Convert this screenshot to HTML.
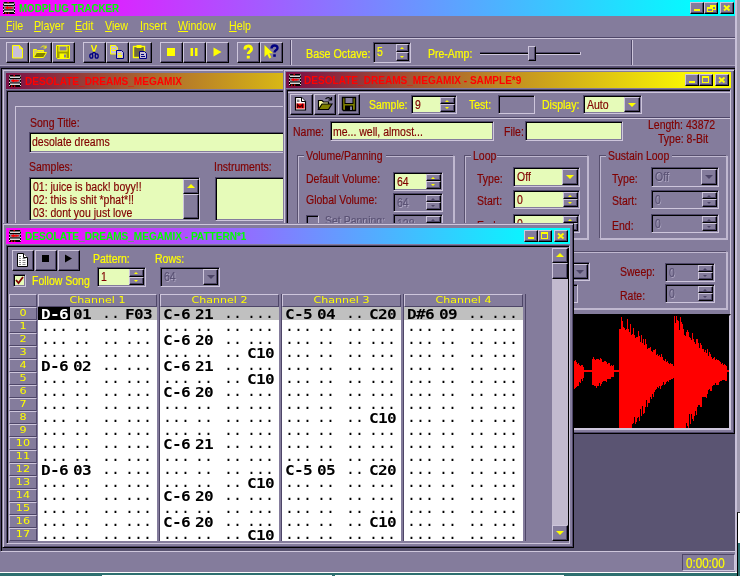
<!DOCTYPE html>
<html><head><meta charset="utf-8"><title>MODPLUG TRACKER</title>
<style>
html,body{margin:0;padding:0}
body{width:740px;height:576px;overflow:hidden;background:#a09ab0;position:relative;font-family:"Liberation Sans",sans-serif}
#app{position:absolute;left:0;top:0;width:736px;height:572px;background:#847c9c;overflow:hidden;will-change:transform}
#app div,#app span,#app svg.ic,#app i{position:absolute;box-sizing:border-box}
.win{background:#847c9c;overflow:hidden}
.rs{background:#847c9c;border:1px solid;border-color:#cec6dc #000000 #000000 #cec6dc;box-shadow:inset -1px -1px 0 #4e4668}
.sk{border:1px solid;border-color:#4e4668 #cec6dc #cec6dc #4e4668;box-shadow:inset 1px 1px 0 #000000,inset -1px -1px 0 #847c9c}
.gb{border:1px solid;border-color:#58506f #c0b8d0 #c0b8d0 #58506f;box-shadow:inset 1px 1px 0 #c0b8d0,1px 1px 0 #c0b8d0}
.t{font-size:12.5px;line-height:14px;color:#800000;white-space:nowrap;transform:scaleX(.84);transform-origin:0 0}
.t{-webkit-text-stroke:.2px currentColor}
.t.y{color:#ffff00}
.t.dis{color:#5a5274;text-shadow:1px 1px 0 #b0a8c4}
.m{font-size:13px;line-height:15px;color:#ffff00;white-space:nowrap;transform:scaleX(.82);transform-origin:0 0}
.cap{font-size:11px;line-height:12px;font-weight:bold;white-space:nowrap;transform-origin:0 0;transform:scaleX(.915)}
.au{left:50%;top:50%;margin:-1px 0 0 -3px;width:0;height:0;border:2px solid transparent;border-top:0;border-bottom:2px solid #ff0}
.ad{left:50%;top:50%;margin:-1px 0 0 -3px;width:0;height:0;border:2px solid transparent;border-bottom:0;border-top:2px solid #ff0}
.ad.big{margin:-2px 0 0 -4px;border-width:4px 4px 0 4px}
.au.big{margin:-3px 0 0 -4px;border-width:0 4px 4px 4px}
.rh{background:#847c9c;border:1px solid;border-color:#cec6dc #4e4668 #4e4668 #cec6dc;color:#ff0;font:8px/11px "DejaVu Sans","Liberation Sans",sans-serif;text-align:center}
.rh b{display:block;font-weight:normal;transform:scaleX(1.4)}
.pt{font:bold 14px/13px "DejaVu Sans Mono","Liberation Mono",monospace;letter-spacing:-.6px;transform:scaleX(1.15);transform-origin:0 0;color:#000;white-space:pre}
/*dots*/.pd{font:bold 11.5px/13px "DejaVu Sans Mono","Liberation Mono",monospace;letter-spacing:2.077px;color:#000;white-space:pre}
.pt.w{color:#fff}
</style></head><body>
<div id="app">
<div style="left:0px;top:0px;width:736px;height:16px;background:linear-gradient(90deg,#ff00ff 0%,#ff00ff 2%,#00ffff 96%,#00ffff 100%)"></div>
<svg class="ic" style="left:3px;top:2px" width="12" height="12" viewBox="0 0 12 12"><rect width="12" height="12" fill="#000"/><rect x="1" y="1.500" width="10" height="1.500" fill="#dcdcdc"/><rect x="1" y="4" width="10" height="3.500" fill="#8a8494"/><rect x="1" y="8.500" width="10" height="1.500" fill="#dcdcdc"/><path d="M.5 .5v11M11.500 .5v11" stroke="#fff" stroke-width="1" stroke-dasharray="1 2.200"/><path d="M2 5.750h8" stroke="#f00" stroke-width="1"/><path d="M3.500 4.800v1.900M4.500 4.300v2.900M5.500 5v1.500M7 4.500v2.500M8 5v1.500" stroke="#f00" stroke-width="1"/><rect x="4.500" y="0" width="1.300" height="1.300" fill="#f00"/><rect x="2" y="10.500" width="1.500" height="1.300" fill="#f00"/><rect x="5" y="10.500" width="1.300" height="1.300" fill="#f00"/></svg>
<span class="cap" style="left:19px;top:2px;color:#00ff00;transform:scaleX(.885)">MODPLUG TRACKER</span>
<div class="rs" style="left:690px;top:2px;width:14px;height:12px;"><i style="left:3px;top:6px;width:6px;height:2px;background:#ff0"></i></div>
<div class="rs" style="left:704px;top:2px;width:14px;height:12px;"><i style="left:5px;top:2px;width:6px;height:5px;border:1px solid #ff0;border-top-width:2px"></i><i style="left:2px;top:4px;width:6px;height:5px;border:1px solid #ff0;border-top-width:2px;background:#847c9c"></i></div>
<div class="rs" style="left:720px;top:2px;width:14px;height:12px;"><svg style="position:absolute;left:2px;top:2px" width="8" height="6" viewBox="0 0 8 6"><path d="M1 .5l5.500 5M6.500 .5L1 5.500" stroke="#ff0" stroke-width="1.900" fill="none"/></svg></div>
<span class="m" style="left:6px;top:18px;"><u>F</u>ile</span>
<span class="m" style="left:34px;top:18px;"><u>P</u>layer</span>
<span class="m" style="left:75px;top:18px;"><u>E</u>dit</span>
<span class="m" style="left:105px;top:18px;"><u>V</u>iew</span>
<span class="m" style="left:140px;top:18px;"><u>I</u>nsert</span>
<span class="m" style="left:178px;top:18px;"><u>W</u>indow</span>
<span class="m" style="left:229px;top:18px;"><u>H</u>elp</span>
<div style="left:0px;top:37px;width:736px;height:1px;background:#4e4668"></div>
<div style="left:0px;top:38px;width:736px;height:1px;background:#cec6dc"></div>
<div style="left:0px;top:65px;width:736px;height:1px;background:#a8a0bc"></div>
<div style="left:0px;top:66px;width:736px;height:1px;background:#5e5678"></div>
<div style="left:290px;top:40px;width:1px;height:25px;background:#4e4668"></div>
<div style="left:291px;top:40px;width:1px;height:25px;background:#cec6dc"></div>
<div style="left:631px;top:40px;width:1px;height:25px;background:#4e4668"></div>
<div style="left:632px;top:40px;width:1px;height:25px;background:#cec6dc"></div>
<div class="rs" style="left:6px;top:42px;width:23px;height:21px;"><svg style="position:absolute;left:2px;top:1px" width="16" height="16" viewBox="0 0 16 16"><path d="M3.500 1.500h7l3 3v9.500h-10z" fill="#c8c0d8" stroke="#ff0"/><path d="M10.500 1.500v3h3" fill="none" stroke="#ff0"/></svg></div>
<div class="rs" style="left:29px;top:42px;width:23px;height:21px;"><svg style="position:absolute;left:2px;top:1px" width="16" height="16" viewBox="0 0 16 16"><path d="M1.5 13.5v-8h3l1 1h6v2" fill="#d8d060" stroke="#ff0"/><path d="M1.5 13.5l3-5h10l-3 5z" fill="#808000" stroke="#ff0"/><path d="M9 3.5c1.500-2 4-2 5 0M14 1.500v2.500h-2.500" fill="none" stroke="#ff0"/></svg></div>
<div class="rs" style="left:52px;top:42px;width:23px;height:21px;"><svg style="position:absolute;left:2px;top:1px" width="16" height="16" viewBox="0 0 16 16"><path d="M1.500 1.500h13v13h-12l-1-1z" fill="#a0a000" stroke="#ff0"/><rect x="4" y="2" width="8" height="5" fill="#847c9c" stroke="#ff0"/><rect x="4.500" y="9.500" width="7" height="5" fill="#ff0"/><rect x="9" y="10.500" width="2" height="3" fill="#847c9c"/><rect x="12.500" y="2.500" width="1" height="1.500" fill="#847c9c"/></svg></div>
<div class="rs" style="left:83px;top:42px;width:23px;height:21px;"><svg style="position:absolute;left:2px;top:1px" width="16" height="16" viewBox="0 0 16 16"><path d="M5.500 1l2.500 7.500M10.500 1l-2.500 7.500" fill="none" stroke="#ff0" stroke-width="1.400"/><path d="M8 8l-2 2M8 8l2 2" stroke="#000080" stroke-width="1.300"/><ellipse cx="5.300" cy="12" rx="1.500" ry="2.200" fill="none" stroke="#000080" stroke-width="1.300"/><ellipse cx="10.700" cy="12" rx="1.500" ry="2.200" fill="none" stroke="#000080" stroke-width="1.300"/></svg></div>
<div class="rs" style="left:106px;top:42px;width:23px;height:21px;"><svg style="position:absolute;left:2px;top:1px" width="16" height="16" viewBox="0 0 16 16"><path d="M1.500 1.500h5l2 2v6.500h-7z" fill="#c8c0d8" stroke="#ff0"/><path d="M3 4.500h3M3 6.500h4" stroke="#ff0"/><path d="M7.500 6.500h5l2 2v6h-7z" fill="#c8c0d8" stroke="#000080"/><path d="M9 9.500h3M9 11.500h4M9 13h4" stroke="#ff0"/></svg></div>
<div class="rs" style="left:129px;top:42px;width:23px;height:21px;"><svg style="position:absolute;left:2px;top:1px" width="16" height="16" viewBox="0 0 16 16"><rect x="1.500" y="2.500" width="11" height="11" fill="#6c6840" stroke="#ff0" stroke-width="1.400"/><rect x="4.500" y="1" width="5" height="3" fill="#ff0"/><path d="M7.500 7.500h5l2 2v5h-7z" fill="#c8c0d8" stroke="#000080"/><path d="M9 10.500h3M9 12.500h4" stroke="#000080"/></svg></div>
<div class="rs" style="left:160px;top:42px;width:23px;height:21px;"><svg style="position:absolute;left:2px;top:1px" width="16" height="16" viewBox="0 0 16 16"><rect x="4" y="4" width="8" height="8" fill="#ff0"/></svg></div>
<div class="rs" style="left:183px;top:42px;width:23px;height:21px;"><svg style="position:absolute;left:2px;top:1px" width="16" height="16" viewBox="0 0 16 16"><rect x="4.500" y="4" width="2.500" height="8" fill="#ff0"/><rect x="9" y="4" width="2.500" height="8" fill="#ff0"/></svg></div>
<div class="rs" style="left:206px;top:42px;width:23px;height:21px;"><svg style="position:absolute;left:2px;top:1px" width="16" height="16" viewBox="0 0 16 16"><path d="M4.500 3.500l8 4.500l-8 4.500z" fill="#ff0"/></svg></div>
<div class="rs" style="left:237px;top:42px;width:23px;height:21px;"><svg style="position:absolute;left:2px;top:1px" width="16" height="16" viewBox="0 0 16 16"><path d="M5 5.500c0-4.500 6.500-4.500 6.500-.5c0 2.800-3.200 2.400-3.200 5" fill="none" stroke="#ff0" stroke-width="3"/><rect x="6.800" y="11.800" width="3" height="2.700" fill="#ff0"/></svg></div>
<div class="rs" style="left:260px;top:42px;width:23px;height:21px;"><svg style="position:absolute;left:2px;top:1px" width="16" height="16" viewBox="0 0 16 16"><path d="M1.500 1v12l2.800-2.800l2 4.300l2-.9l-2-4.300h3.700z" fill="#ff0"/><path d="M8.500 4.500c0-4 6-4 6-.5c0 2.500-3 2.200-3 4.500" fill="none" stroke="#000080" stroke-width="2.400"/><rect x="10.200" y="10.300" width="2.600" height="2.500" fill="#000080"/></svg></div>
<span class="t y" style="left:306px;top:46.5px;transform:scaleX(.86)">Base Octave:</span>
<div class="sk" style="left:373px;top:42px;width:38px;height:21px;background:#847c9c;"></div>
<div class="rs" style="left:396px;top:44px;width:13px;height:8px;"><i class="au" style="border-bottom-color:#ffff00"></i></div>
<div class="rs" style="left:396px;top:52px;width:13px;height:9px;"><i class="ad" style="border-top-color:#ffff00"></i></div>
<span class="t y" style="left:376.5px;top:45px;">5</span>
<span class="t y" style="left:427.5px;top:46.5px;">Pre-Amp:</span>
<div style="left:480px;top:52px;width:101px;height:1px;background:#4e4668"></div>
<div style="left:480px;top:53px;width:101px;height:1px;background:#000000"></div>
<div style="left:480px;top:54px;width:101px;height:1px;background:#cec6dc"></div>
<div style="left:580px;top:52px;width:1px;height:3px;background:#cec6dc"></div>
<div class="rs" style="left:528px;top:46px;width:8px;height:15px;"></div>
<div class="sk" style="left:682px;top:554px;width:53px;height:17px;background:#847c9c;box-shadow:none"></div>
<span class="t y" style="left:686px;top:555px;font-size:14.5px;line-height:16px;transform:scaleX(.8)">0:00:00</span>
<div style="left:0px;top:67px;width:736px;height:485px;background:#5a5472;border:1px solid;border-color:#4e4668 #cec6dc #cec6dc #4e4668;box-shadow:inset 1px 1px 0 #000"></div>
<div class="win" style="left:2px;top:69px;width:300px;height:300px;border:1px solid;border-color:#847c9c #000 #000 #847c9c;box-shadow:inset 1px 1px 0 #cec6dc,inset -1px -1px 0 #4e4668"></div>
<div style="left:6px;top:73px;width:394px;height:16px;background:linear-gradient(90deg,#7c1048 0%,#ffff00 100%)"></div>
<svg class="ic" style="left:9px;top:75px" width="12" height="12" viewBox="0 0 12 12"><rect width="12" height="12" fill="#000"/><rect x="1" y="1.500" width="10" height="1.500" fill="#dcdcdc"/><rect x="1" y="4" width="10" height="3.500" fill="#8a8494"/><rect x="1" y="8.500" width="10" height="1.500" fill="#dcdcdc"/><path d="M.5 .5v11M11.500 .5v11" stroke="#fff" stroke-width="1" stroke-dasharray="1 2.200"/><path d="M2 5.750h8" stroke="#f00" stroke-width="1"/><path d="M3.500 4.800v1.900M4.500 4.300v2.900M5.500 5v1.500M7 4.500v2.500M8 5v1.500" stroke="#f00" stroke-width="1"/><rect x="4.500" y="0" width="1.300" height="1.300" fill="#f00"/><rect x="2" y="10.500" width="1.500" height="1.300" fill="#f00"/><rect x="5" y="10.500" width="1.300" height="1.300" fill="#f00"/></svg>
<span class="cap" style="left:25px;top:75px;color:#ff0000">DESOLATE_DREAMS_MEGAMIX</span>
<div style="left:6px;top:90px;width:292px;height:280px;border:1px solid;border-color:#4e4668 #cec6dc #cec6dc #4e4668;box-shadow:inset 1px 1px 0 #000"></div>
<div style="left:15px;top:106px;width:280px;height:1px;background:#cec6dc"></div>
<div style="left:15px;top:106px;width:1px;height:200px;background:#cec6dc"></div>
<span class="t" style="left:30px;top:116px;">Song Title:</span>
<div class="sk" style="left:29px;top:132px;width:262px;height:21px;background:#e6fbb9;"></div>
<span class="t" style="left:32px;top:135px;">desolate dreams</span>
<span class="t" style="left:29px;top:160px;">Samples:</span>
<span class="t" style="left:214px;top:160px;">Instruments:</span>
<div class="sk" style="left:29px;top:177px;width:171px;height:44px;background:#e6fbb9;"></div>
<span class="t" style="left:33px;top:180px;">01: juice is back! boyy!!</span>
<span class="t" style="left:33px;top:193px;">02: this is shit *phat*!!</span>
<span class="t" style="left:33px;top:206px;">03: dont you just love</span>
<div style="left:183px;top:179px;width:16px;height:40px;background:#c2bacf"></div>
<div class="rs" style="left:183px;top:179px;width:16px;height:15px;"><i class="au big"></i></div>
<div class="rs" style="left:183px;top:194px;width:16px;height:25px;"></div>
<div class="sk" style="left:215px;top:177px;width:76px;height:44px;background:#e6fbb9;"></div>
<div class="win" style="left:283px;top:69px;width:452px;height:365px;border:1px solid;border-color:#847c9c #000 #000 #847c9c;box-shadow:inset 1px 1px 0 #cec6dc,inset -1px -1px 0 #4e4668"></div>
<div style="left:286px;top:72px;width:445px;height:16px;background:linear-gradient(90deg,#7c1048 0%,#7c1048 1%,#ffff00 94%,#ffff00 100%)"></div>
<svg class="ic" style="left:289px;top:74px" width="12" height="12" viewBox="0 0 12 12"><rect width="12" height="12" fill="#000"/><rect x="1" y="1.500" width="10" height="1.500" fill="#dcdcdc"/><rect x="1" y="4" width="10" height="3.500" fill="#8a8494"/><rect x="1" y="8.500" width="10" height="1.500" fill="#dcdcdc"/><path d="M.5 .5v11M11.500 .5v11" stroke="#fff" stroke-width="1" stroke-dasharray="1 2.200"/><path d="M2 5.750h8" stroke="#f00" stroke-width="1"/><path d="M3.500 4.800v1.900M4.500 4.300v2.900M5.500 5v1.500M7 4.500v2.500M8 5v1.500" stroke="#f00" stroke-width="1"/><rect x="4.500" y="0" width="1.300" height="1.300" fill="#f00"/><rect x="2" y="10.500" width="1.500" height="1.300" fill="#f00"/><rect x="5" y="10.500" width="1.300" height="1.300" fill="#f00"/></svg>
<span class="cap" style="left:304px;top:74px;color:#ff0000">DESOLATE_DREAMS_MEGAMIX - SAMPLE*9</span>
<div class="rs" style="left:685px;top:74px;width:14px;height:12px;"><i style="left:3px;top:6px;width:6px;height:2px;background:#ff0"></i></div>
<div class="rs" style="left:699px;top:74px;width:14px;height:12px;"><i style="left:2px;top:1px;width:7px;height:7px;border:1px solid #ff0;border-top-width:2px"></i></div>
<div class="rs" style="left:715px;top:74px;width:14px;height:12px;"><svg style="position:absolute;left:2px;top:2px" width="8" height="6" viewBox="0 0 8 6"><path d="M1 .5l5.500 5M6.500 .5L1 5.500" stroke="#ff0" stroke-width="1.900" fill="none"/></svg></div>
<div style="left:286px;top:89px;width:445px;height:341px;border:1px solid;border-color:#4e4668 #cec6dc #cec6dc #4e4668;box-shadow:inset 1px 1px 0 #000"></div>
<div style="left:288px;top:92px;width:442px;height:1px;background:#cec6dc"></div>
<div class="rs" style="left:290px;top:94px;width:23px;height:21px;"><svg style="position:absolute;left:2px;top:1px" width="16" height="16" viewBox="0 0 16 16"><path d="M2.500 1.500h6l4 4v8.500h-10z" fill="#fff" stroke="#000" stroke-width="1.200"/><path d="M8.500 1.500v4h4" fill="#fff" stroke="#000"/><rect x="4" y="3.500" width="2.500" height="2.500" fill="#888"/><rect x="3.500" y="7.500" width="8" height="5" fill="#f00"/><path d="M4.500 12v-3.500l2.500 2.500l2.500-2.500v3.500" fill="none" stroke="#400" stroke-width="1.300"/></svg></div>
<div class="rs" style="left:314px;top:94px;width:22px;height:21px;"><svg style="position:absolute;left:2px;top:1px" width="16" height="16" viewBox="0 0 16 16"><path d="M1.500 13.500v-9h3.500l1.500 1.500h5v2.500" fill="#ffffa0" stroke="#000" stroke-width="1.200"/><path d="M1.500 13.500l3.500-5.500h10l-3.500 5.500z" fill="#808000" stroke="#000" stroke-width="1.200"/><path d="M8.500 3c1.500-2 4.500-2 5.500 0.500M14.500 1v3h-3" fill="none" stroke="#000" stroke-width="1.200"/></svg></div>
<div class="rs" style="left:338px;top:94px;width:22px;height:21px;"><svg style="position:absolute;left:2px;top:1px" width="16" height="16" viewBox="0 0 16 16"><path d="M1.500 1.500h13v13h-12l-1-1z" fill="#808000" stroke="#000" stroke-width="1.400"/><rect x="4" y="1.500" width="8" height="6" fill="#847c9c" stroke="#000"/><rect x="4" y="9.500" width="8" height="5" fill="#000"/><rect x="9" y="10.500" width="2" height="3.500" fill="#847c9c"/></svg></div>
<span class="t y" style="left:369px;top:98px;">Sample:</span>
<div class="sk" style="left:411px;top:95px;width:46px;height:19px;background:#e6fbb9;"></div>
<div class="rs" style="left:440px;top:97px;width:15px;height:7px;"><i class="au" style="border-bottom-color:#ffff00"></i></div>
<div class="rs" style="left:440px;top:104px;width:15px;height:8px;"><i class="ad" style="border-top-color:#ffff00"></i></div>
<span class="t" style="left:415px;top:98px;">9</span>
<span class="t y" style="left:469px;top:98px;">Test:</span>
<div class="sk" style="left:498px;top:95px;width:37px;height:19px;background:#847c9c;"></div>
<span class="t y" style="left:542px;top:98px;">Display:</span>
<div class="sk" style="left:583px;top:95px;width:59px;height:19px;background:#e6fbb9;"></div>
<div class="rs" style="left:624px;top:97px;width:16px;height:15px;"><i class="ad big" style="border-top-color:#ffff00"></i></div>
<span class="t" style="left:586.5px;top:98px;">Auto</span>
<div style="left:288px;top:117px;width:442px;height:1px;background:#4e4668"></div>
<div style="left:288px;top:118px;width:442px;height:1px;background:#cec6dc"></div>
<span class="t" style="left:293px;top:125px;">Name:</span>
<div class="sk" style="left:330px;top:121px;width:164px;height:20px;background:#e6fbb9;"></div>
<span class="t" style="left:333px;top:124.5px;">me... well, almost...</span>
<span class="t" style="left:504px;top:125px;">File:</span>
<div class="sk" style="left:525px;top:121px;width:98px;height:20px;background:#e6fbb9;"></div>
<span class="t" style="left:648px;top:118px;">Length: 43872</span>
<span class="t" style="left:658px;top:132px;">Type: 8-Bit</span>
<div class="gb" style="left:297px;top:155px;width:157px;height:90px;"></div>
<div style="left:304px;top:154px;width:82px;height:4px;background:#847c9c"></div>
<span class="t" style="left:306px;top:149px;">Volume/Panning</span>
<span class="t" style="left:306px;top:172px;">Default Volume:</span>
<div class="sk" style="left:393px;top:172px;width:50px;height:19px;background:#e6fbb9;"></div>
<div class="rs" style="left:426px;top:174px;width:15px;height:7px;"><i class="au" style="border-bottom-color:#ffff00"></i></div>
<div class="rs" style="left:426px;top:181px;width:15px;height:8px;"><i class="ad" style="border-top-color:#ffff00"></i></div>
<span class="t" style="left:397px;top:175px;">64</span>
<span class="t" style="left:306px;top:193px;">Global Volume:</span>
<div class="sk" style="left:393px;top:193px;width:50px;height:19px;background:#847c9c;"></div>
<div class="rs" style="left:426px;top:195px;width:15px;height:7px;"><i class="au" style="border-bottom-color:#4e4668"></i></div>
<div class="rs" style="left:426px;top:202px;width:15px;height:8px;"><i class="ad" style="border-top-color:#4e4668"></i></div>
<span class="t dis" style="left:397px;top:196px;">64</span>
<div class="sk" style="left:306px;top:215px;width:13px;height:13px;background:#847c9c;"></div>
<span class="t dis" style="left:325px;top:214px;">Set Panning:</span>
<div class="sk" style="left:393px;top:214px;width:50px;height:19px;background:#847c9c;"></div>
<div class="rs" style="left:426px;top:216px;width:15px;height:7px;"><i class="au" style="border-bottom-color:#4e4668"></i></div>
<div class="rs" style="left:426px;top:223px;width:15px;height:8px;"><i class="ad" style="border-top-color:#4e4668"></i></div>
<span class="t dis" style="left:397px;top:217px;">128</span>
<div class="gb" style="left:464px;top:155px;width:124px;height:84px;"></div>
<div style="left:471px;top:154px;width:26px;height:4px;background:#847c9c"></div>
<span class="t" style="left:473px;top:149px;">Loop</span>
<span class="t" style="left:477px;top:172px;">Type:</span>
<div class="sk" style="left:513px;top:167px;width:67px;height:20px;background:#e6fbb9;"></div>
<div class="rs" style="left:562px;top:169px;width:16px;height:16px;"><i class="ad big" style="border-top-color:#ffff00"></i></div>
<span class="t" style="left:516.5px;top:170px;">Off</span>
<span class="t" style="left:477px;top:194px;">Start:</span>
<div class="sk" style="left:513px;top:190px;width:67px;height:19px;background:#e6fbb9;"></div>
<div class="rs" style="left:563px;top:192px;width:15px;height:7px;"><i class="au" style="border-bottom-color:#ffff00"></i></div>
<div class="rs" style="left:563px;top:199px;width:15px;height:8px;"><i class="ad" style="border-top-color:#ffff00"></i></div>
<span class="t" style="left:517px;top:193px;">0</span>
<span class="t" style="left:477px;top:219px;">End:</span>
<div class="sk" style="left:513px;top:214px;width:67px;height:19px;background:#e6fbb9;"></div>
<div class="rs" style="left:563px;top:216px;width:15px;height:7px;"><i class="au" style="border-bottom-color:#ffff00"></i></div>
<div class="rs" style="left:563px;top:223px;width:15px;height:8px;"><i class="ad" style="border-top-color:#ffff00"></i></div>
<span class="t" style="left:517px;top:217px;">0</span>
<div class="gb" style="left:599px;top:155px;width:128px;height:84px;"></div>
<div style="left:606px;top:154px;width:66px;height:4px;background:#847c9c"></div>
<span class="t" style="left:608px;top:149px;">Sustain Loop</span>
<span class="t" style="left:612px;top:172px;">Type:</span>
<div class="sk" style="left:651px;top:167px;width:68px;height:20px;background:#847c9c;"></div>
<div class="rs" style="left:701px;top:169px;width:16px;height:16px;"><i class="ad big" style="border-top-color:#4e4668"></i></div>
<span class="t dis" style="left:654.5px;top:170px;">Off</span>
<span class="t" style="left:612px;top:194px;">Start:</span>
<div class="sk" style="left:651px;top:190px;width:68px;height:19px;background:#847c9c;"></div>
<div class="rs" style="left:702px;top:192px;width:15px;height:7px;"><i class="au" style="border-bottom-color:#4e4668"></i></div>
<div class="rs" style="left:702px;top:199px;width:15px;height:8px;"><i class="ad" style="border-top-color:#4e4668"></i></div>
<span class="t dis" style="left:655px;top:193px;">0</span>
<span class="t" style="left:612px;top:219px;">End:</span>
<div class="sk" style="left:651px;top:214px;width:68px;height:19px;background:#847c9c;"></div>
<div class="rs" style="left:702px;top:216px;width:15px;height:7px;"><i class="au" style="border-bottom-color:#4e4668"></i></div>
<div class="rs" style="left:702px;top:223px;width:15px;height:8px;"><i class="ad" style="border-top-color:#4e4668"></i></div>
<span class="t dis" style="left:655px;top:217px;">0</span>
<div class="gb" style="left:297px;top:251px;width:430px;height:58px;"></div>
<div class="sk" style="left:520px;top:262px;width:70px;height:19px;background:#847c9c;"></div>
<div class="rs" style="left:572px;top:264px;width:16px;height:15px;"><i class="ad big" style="border-top-color:#4e4668"></i></div>
<div class="sk" style="left:520px;top:284px;width:58px;height:19px;background:#847c9c;"></div>
<span class="t" style="left:620px;top:265px;">Sweep:</span>
<div class="sk" style="left:665px;top:263px;width:50px;height:19px;background:#847c9c;"></div>
<div class="rs" style="left:698px;top:265px;width:15px;height:7px;"><i class="au" style="border-bottom-color:#4e4668"></i></div>
<div class="rs" style="left:698px;top:272px;width:15px;height:8px;"><i class="ad" style="border-top-color:#4e4668"></i></div>
<span class="t dis" style="left:669px;top:266px;">0</span>
<span class="t" style="left:620px;top:289px;">Rate:</span>
<div class="sk" style="left:665px;top:284px;width:50px;height:19px;background:#847c9c;"></div>
<div class="rs" style="left:698px;top:286px;width:15px;height:7px;"><i class="au" style="border-bottom-color:#4e4668"></i></div>
<div class="rs" style="left:698px;top:293px;width:15px;height:8px;"><i class="ad" style="border-top-color:#4e4668"></i></div>
<span class="t dis" style="left:669px;top:287px;">0</span>
<div style="left:288px;top:314px;width:443px;height:116px;background:#000;border:1px solid;border-color:#4e4668 #cec6dc #cec6dc #4e4668;border-width:2px;border-top-color:#000;border-left-color:#000"></div>
<svg class="ic" style="left:574px;top:314px" width="155" height="114" viewBox="0 0 155 114" shape-rendering="crispEdges"><path d="M0 57V47H1V46H2V48H3V50H4V49H5V51H6V52H7V51H8V51H9V53H10V56H11V56H12V56H13V56H14V56H15V56H16V56H17V56H18V45H19V43H20V45H21V46H22V45H23V45H24V45H25V46H26V44H27V45H28V48H29V48H30V47H31V47H32V48H33V50H34V49H35V49H36V52H37V51H38V52H39V51H40V56H41V56H42V56H43V56H44V56H45V15H46V15H47V3H48V7H49V13H50V14H51V16H52V15H53V5H54V15H55V18H56V10H57V21H58V20H59V14H60V21H61V24H62V23H63V23H64V17H65V22H66V28H67V21H68V29H69V25H70V31H71V25H72V30H73V35H74V34H75V34H76V33H77V37H78V38H79V36H80V36H81V35H82V41H83V40H84V42H85V41H86V43H87V40H88V43H89V46H90V47H91V45H92V48H93V47H94V49H95V50H96V49H97V50H98V50H99V52H100V2H101V9H102V2H103V6H104V7H105V16H106V3H107V8H108V10H109V15H110V21H111V22H112V18H113V16H114V18H115V23H116V24H117V26H118V19H119V25H120V28H121V30H122V25H123V25H124V29H125V34H126V29H127V31H128V35H129V35H130V38H131V36H132V39H133V35H134V42H135V38H136V40H137V43H138V45H139V44H140V43H141V46H142V45H143V46H144V46H145V47H146V48H147V50H148V49H149V51H150V50H151V51H152V52H153V56H154V56H155V56H156V57V58H155V58H154V58H153V67H152V67H151V66H150V66H149V66H148V67H147V67H146V68H145V71H144V71H143V71H142V69H141V71H140V71H139V72H138V77H137V77H136V75H135V76H134V80H133V84H132V83H131V83H130V83H129V83H128V93H127V93H126V91H125V91H124V93H123V101H122V97H121V102H120V107H119V105H118V100H117V110H116V100H115V114H114V112H113V109H112V114H111V114H110V114H109V114H108V114H107V114H106V114H105V114H104V114H103V114H102V114H101V114H100V64H99V65H98V65H97V66H96V66H95V68H94V67H93V68H92V70H91V71H90V68H89V71H88V72H87V75H86V72H85V74H84V73H83V75H82V76H81V78H80V83H79V80H78V85H77V83H76V89H75V89H74V93H73V86H72V93H71V99H70V100H69V92H68V102H67V95H66V107H65V103H64V104H63V108H62V110H61V103H60V109H59V110H58V114H57V114H56V114H55V114H54V114H53V114H52V114H51V114H50V114H49V114H48V114H47V114H46V114H45V58H44V58H43V58H42V58H41V58H40V63H39V63H38V63H37V65H36V65H35V65H34V65H33V68H32V67H31V67H30V67H29V68H28V70H27V72H26V69H25V72H24V72H23V74H22V72H21V72H20V71H19V71H18V58H17V58H16V58H15V58H14V58H13V58H12V58H11V58H10V64H9V67H8V65H7V69H6V68H5V72H4V72H3V73H2V74H1V75H0Z" fill="#ff0000"/><path d="M0 57.5H155" stroke="#f00"/></svg>
<div class="win" style="left:2px;top:223px;width:572px;height:325px;border:1px solid;border-color:#847c9c #000 #000 #847c9c;box-shadow:inset 1px 1px 0 #cec6dc,inset -1px -1px 0 #4e4668"></div>
<div style="left:6px;top:228px;width:564px;height:16px;background:linear-gradient(90deg,#ff00ff 0%,#ff00ff 2%,#00ffff 96%,#00ffff 100%)"></div>
<svg class="ic" style="left:9px;top:230px" width="12" height="12" viewBox="0 0 12 12"><rect width="12" height="12" fill="#000"/><rect x="1" y="1.500" width="10" height="1.500" fill="#dcdcdc"/><rect x="1" y="4" width="10" height="3.500" fill="#8a8494"/><rect x="1" y="8.500" width="10" height="1.500" fill="#dcdcdc"/><path d="M.5 .5v11M11.500 .5v11" stroke="#fff" stroke-width="1" stroke-dasharray="1 2.200"/><path d="M2 5.750h8" stroke="#f00" stroke-width="1"/><path d="M3.500 4.800v1.900M4.500 4.300v2.900M5.500 5v1.500M7 4.500v2.500M8 5v1.500" stroke="#f00" stroke-width="1"/><rect x="4.500" y="0" width="1.300" height="1.300" fill="#f00"/><rect x="2" y="10.500" width="1.500" height="1.300" fill="#f00"/><rect x="5" y="10.500" width="1.300" height="1.300" fill="#f00"/></svg>
<span class="cap" style="left:25px;top:230px;color:#00ff00">DESOLATE_DREAMS_MEGAMIX - PATTERN*1</span>
<div class="rs" style="left:524px;top:230px;width:14px;height:12px;"><i style="left:3px;top:6px;width:6px;height:2px;background:#ff0"></i></div>
<div class="rs" style="left:538px;top:230px;width:14px;height:12px;"><i style="left:2px;top:1px;width:7px;height:7px;border:1px solid #ff0;border-top-width:2px"></i></div>
<div class="rs" style="left:554px;top:230px;width:14px;height:12px;"><svg style="position:absolute;left:2px;top:2px" width="8" height="6" viewBox="0 0 8 6"><path d="M1 .5l5.500 5M6.500 .5L1 5.500" stroke="#ff0" stroke-width="1.900" fill="none"/></svg></div>
<div style="left:6px;top:245px;width:564px;height:299px;border:1px solid;border-color:#4e4668 #cec6dc #cec6dc #4e4668;box-shadow:inset 1px 1px 0 #000"></div>
<div class="rs" style="left:12px;top:250px;width:22px;height:21px;"><svg style="position:absolute;left:2px;top:1px" width="16" height="16" viewBox="0 0 16 16"><path d="M2.500 1.500h6l4 4v9h-10z" fill="#fff" stroke="#000"/><path d="M8.500 1.500v4h4" fill="#fff" stroke="#000"/><path d="M4 6.500h2M7.500 6.500h3M4 8.500h2M7.500 8.500h3M4 10.500h2M7.500 10.500h3M4 12.500h2M7.500 12.500h3M4 4.500h2" stroke="#888" stroke-width="1"/></svg></div>
<div class="rs" style="left:35px;top:250px;width:22px;height:21px;"><svg style="position:absolute;left:2px;top:1px" width="16" height="16" viewBox="0 0 16 16"><rect x="4" y="3" width="7" height="7" fill="#000"/></svg></div>
<div class="rs" style="left:58px;top:250px;width:22px;height:21px;"><svg style="position:absolute;left:2px;top:1px" width="16" height="16" viewBox="0 0 16 16"><path d="M4 2.500l7 4l-7 4z" fill="#000"/></svg></div>
<span class="t y" style="left:93px;top:252px;">Pattern:</span>
<span class="t y" style="left:155px;top:252px;">Rows:</span>
<div class="sk" style="left:13px;top:274px;width:13px;height:13px;background:#e6fbb9;"><svg style="position:absolute;left:1px;top:1px" width="9" height="9" viewBox="0 0 9 9"><path d="M1 4l2.500 3l4.500-6" fill="none" stroke="#800000" stroke-width="1.800"/></svg></div>
<span class="t y" style="left:32px;top:274px;">Follow Song</span>
<div class="sk" style="left:97px;top:267px;width:49px;height:20px;background:#e6fbb9;"></div>
<div class="rs" style="left:129px;top:269px;width:15px;height:8px;"><i class="au" style="border-bottom-color:#ffff00"></i></div>
<div class="rs" style="left:129px;top:277px;width:15px;height:8px;"><i class="ad" style="border-top-color:#ffff00"></i></div>
<span class="t" style="left:101px;top:270px;">1</span>
<div class="sk" style="left:160px;top:267px;width:60px;height:20px;background:#847c9c;"></div>
<div class="rs" style="left:203px;top:269px;width:15px;height:16px;"><i class="ad big" style="border-top-color:#4e4668"></i></div>
<span class="t dis" style="left:163.5px;top:270px;">64</span>
<div style="left:552px;top:248px;width:16px;height:293px;background:#c2bacf"></div>
<div class="rs" style="left:552px;top:248px;width:16px;height:15px;"><i class="au big"></i></div>
<div class="rs" style="left:552px;top:263px;width:16px;height:16px;"></div>
<div class="rs" style="left:552px;top:525px;width:16px;height:16px;"><i class="ad big"></i></div>
<div style="left:568px;top:248px;width:1px;height:293px;background:#000"></div>
<div class="rh" style="left:9px;top:294px;width:28px;height:13px;"></div>
<div class="rh" style="left:38px;top:294px;width:119px;height:13px;"><b style="transform:scaleX(1.38)">Channel 1</b></div>
<div class="rh" style="left:160px;top:294px;width:119px;height:13px;"><b style="transform:scaleX(1.38)">Channel 2</b></div>
<div class="rh" style="left:282px;top:294px;width:119px;height:13px;"><b style="transform:scaleX(1.38)">Channel 3</b></div>
<div class="rh" style="left:404px;top:294px;width:119px;height:13px;"><b style="transform:scaleX(1.38)">Channel 4</b></div>
<div class="rh" style="left:9px;top:307px;width:28px;height:13px;"><b>0</b></div>
<div style="left:38px;top:307px;width:119px;height:13px;background:#c0c0c0"></div>
<div style="left:38px;top:307px;width:32px;height:13px;background:#000"></div>
<span class="pt w" style="left:41px;top:307.5px;">D-6</span>
<span class="pt" style="left:73px;top:307.5px;">01</span>
<span class="pd" style="left:103px;top:308px;">..</span>
<span class="pt" style="left:125px;top:307.5px;">F03</span>
<div style="left:160px;top:307px;width:119px;height:13px;background:#c0c0c0"></div>
<span class="pt" style="left:163px;top:307.5px;">C-6</span>
<span class="pt" style="left:195px;top:307.5px;">21</span>
<span class="pd" style="left:225px;top:308px;">..</span>
<span class="pd" style="left:248px;top:308px;">...</span>
<div style="left:282px;top:307px;width:119px;height:13px;background:#c0c0c0"></div>
<span class="pt" style="left:285px;top:307.5px;">C-5</span>
<span class="pt" style="left:317px;top:307.5px;">04</span>
<span class="pd" style="left:347px;top:308px;">..</span>
<span class="pt" style="left:369px;top:307.5px;">C20</span>
<div style="left:404px;top:307px;width:119px;height:13px;background:#c0c0c0"></div>
<span class="pt" style="left:407px;top:307.5px;">D#6</span>
<span class="pt" style="left:439px;top:307.5px;">09</span>
<span class="pd" style="left:469px;top:308px;">..</span>
<span class="pd" style="left:492px;top:308px;">...</span>
<div class="rh" style="left:9px;top:320px;width:28px;height:13px;"><b>1</b></div>
<div style="left:38px;top:320px;width:119px;height:13px;background:#fff"></div>
<span class="pd" style="left:42px;top:321px;">...</span>
<span class="pd" style="left:74px;top:321px;">..</span>
<span class="pd" style="left:103px;top:321px;">..</span>
<span class="pd" style="left:126px;top:321px;">...</span>
<div style="left:160px;top:320px;width:119px;height:13px;background:#fff"></div>
<span class="pd" style="left:164px;top:321px;">...</span>
<span class="pd" style="left:196px;top:321px;">..</span>
<span class="pd" style="left:225px;top:321px;">..</span>
<span class="pd" style="left:248px;top:321px;">...</span>
<div style="left:282px;top:320px;width:119px;height:13px;background:#fff"></div>
<span class="pd" style="left:286px;top:321px;">...</span>
<span class="pd" style="left:318px;top:321px;">..</span>
<span class="pd" style="left:347px;top:321px;">..</span>
<span class="pd" style="left:370px;top:321px;">...</span>
<div style="left:404px;top:320px;width:119px;height:13px;background:#fff"></div>
<span class="pd" style="left:408px;top:321px;">...</span>
<span class="pd" style="left:440px;top:321px;">..</span>
<span class="pd" style="left:469px;top:321px;">..</span>
<span class="pd" style="left:492px;top:321px;">...</span>
<div class="rh" style="left:9px;top:333px;width:28px;height:13px;"><b>2</b></div>
<div style="left:38px;top:333px;width:119px;height:13px;background:#fff"></div>
<span class="pd" style="left:42px;top:334px;">...</span>
<span class="pd" style="left:74px;top:334px;">..</span>
<span class="pd" style="left:103px;top:334px;">..</span>
<span class="pd" style="left:126px;top:334px;">...</span>
<div style="left:160px;top:333px;width:119px;height:13px;background:#fff"></div>
<span class="pt" style="left:163px;top:333.5px;">C-6</span>
<span class="pt" style="left:195px;top:333.5px;">20</span>
<span class="pd" style="left:225px;top:334px;">..</span>
<span class="pd" style="left:248px;top:334px;">...</span>
<div style="left:282px;top:333px;width:119px;height:13px;background:#fff"></div>
<span class="pd" style="left:286px;top:334px;">...</span>
<span class="pd" style="left:318px;top:334px;">..</span>
<span class="pd" style="left:347px;top:334px;">..</span>
<span class="pd" style="left:370px;top:334px;">...</span>
<div style="left:404px;top:333px;width:119px;height:13px;background:#fff"></div>
<span class="pd" style="left:408px;top:334px;">...</span>
<span class="pd" style="left:440px;top:334px;">..</span>
<span class="pd" style="left:469px;top:334px;">..</span>
<span class="pd" style="left:492px;top:334px;">...</span>
<div class="rh" style="left:9px;top:346px;width:28px;height:13px;"><b>3</b></div>
<div style="left:38px;top:346px;width:119px;height:13px;background:#fff"></div>
<span class="pd" style="left:42px;top:347px;">...</span>
<span class="pd" style="left:74px;top:347px;">..</span>
<span class="pd" style="left:103px;top:347px;">..</span>
<span class="pd" style="left:126px;top:347px;">...</span>
<div style="left:160px;top:346px;width:119px;height:13px;background:#fff"></div>
<span class="pd" style="left:164px;top:347px;">...</span>
<span class="pd" style="left:196px;top:347px;">..</span>
<span class="pd" style="left:225px;top:347px;">..</span>
<span class="pt" style="left:247px;top:346.5px;">C10</span>
<div style="left:282px;top:346px;width:119px;height:13px;background:#fff"></div>
<span class="pd" style="left:286px;top:347px;">...</span>
<span class="pd" style="left:318px;top:347px;">..</span>
<span class="pd" style="left:347px;top:347px;">..</span>
<span class="pd" style="left:370px;top:347px;">...</span>
<div style="left:404px;top:346px;width:119px;height:13px;background:#fff"></div>
<span class="pd" style="left:408px;top:347px;">...</span>
<span class="pd" style="left:440px;top:347px;">..</span>
<span class="pd" style="left:469px;top:347px;">..</span>
<span class="pd" style="left:492px;top:347px;">...</span>
<div class="rh" style="left:9px;top:359px;width:28px;height:13px;"><b>4</b></div>
<div style="left:38px;top:359px;width:119px;height:13px;background:#fff"></div>
<span class="pt" style="left:41px;top:359.5px;">D-6</span>
<span class="pt" style="left:73px;top:359.5px;">02</span>
<span class="pd" style="left:103px;top:360px;">..</span>
<span class="pd" style="left:126px;top:360px;">...</span>
<div style="left:160px;top:359px;width:119px;height:13px;background:#fff"></div>
<span class="pt" style="left:163px;top:359.5px;">C-6</span>
<span class="pt" style="left:195px;top:359.5px;">21</span>
<span class="pd" style="left:225px;top:360px;">..</span>
<span class="pd" style="left:248px;top:360px;">...</span>
<div style="left:282px;top:359px;width:119px;height:13px;background:#fff"></div>
<span class="pd" style="left:286px;top:360px;">...</span>
<span class="pd" style="left:318px;top:360px;">..</span>
<span class="pd" style="left:347px;top:360px;">..</span>
<span class="pd" style="left:370px;top:360px;">...</span>
<div style="left:404px;top:359px;width:119px;height:13px;background:#fff"></div>
<span class="pd" style="left:408px;top:360px;">...</span>
<span class="pd" style="left:440px;top:360px;">..</span>
<span class="pd" style="left:469px;top:360px;">..</span>
<span class="pd" style="left:492px;top:360px;">...</span>
<div class="rh" style="left:9px;top:372px;width:28px;height:13px;"><b>5</b></div>
<div style="left:38px;top:372px;width:119px;height:13px;background:#fff"></div>
<span class="pd" style="left:42px;top:373px;">...</span>
<span class="pd" style="left:74px;top:373px;">..</span>
<span class="pd" style="left:103px;top:373px;">..</span>
<span class="pd" style="left:126px;top:373px;">...</span>
<div style="left:160px;top:372px;width:119px;height:13px;background:#fff"></div>
<span class="pd" style="left:164px;top:373px;">...</span>
<span class="pd" style="left:196px;top:373px;">..</span>
<span class="pd" style="left:225px;top:373px;">..</span>
<span class="pt" style="left:247px;top:372.5px;">C10</span>
<div style="left:282px;top:372px;width:119px;height:13px;background:#fff"></div>
<span class="pd" style="left:286px;top:373px;">...</span>
<span class="pd" style="left:318px;top:373px;">..</span>
<span class="pd" style="left:347px;top:373px;">..</span>
<span class="pd" style="left:370px;top:373px;">...</span>
<div style="left:404px;top:372px;width:119px;height:13px;background:#fff"></div>
<span class="pd" style="left:408px;top:373px;">...</span>
<span class="pd" style="left:440px;top:373px;">..</span>
<span class="pd" style="left:469px;top:373px;">..</span>
<span class="pd" style="left:492px;top:373px;">...</span>
<div class="rh" style="left:9px;top:385px;width:28px;height:13px;"><b>6</b></div>
<div style="left:38px;top:385px;width:119px;height:13px;background:#fff"></div>
<span class="pd" style="left:42px;top:386px;">...</span>
<span class="pd" style="left:74px;top:386px;">..</span>
<span class="pd" style="left:103px;top:386px;">..</span>
<span class="pd" style="left:126px;top:386px;">...</span>
<div style="left:160px;top:385px;width:119px;height:13px;background:#fff"></div>
<span class="pt" style="left:163px;top:385.5px;">C-6</span>
<span class="pt" style="left:195px;top:385.5px;">20</span>
<span class="pd" style="left:225px;top:386px;">..</span>
<span class="pd" style="left:248px;top:386px;">...</span>
<div style="left:282px;top:385px;width:119px;height:13px;background:#fff"></div>
<span class="pd" style="left:286px;top:386px;">...</span>
<span class="pd" style="left:318px;top:386px;">..</span>
<span class="pd" style="left:347px;top:386px;">..</span>
<span class="pd" style="left:370px;top:386px;">...</span>
<div style="left:404px;top:385px;width:119px;height:13px;background:#fff"></div>
<span class="pd" style="left:408px;top:386px;">...</span>
<span class="pd" style="left:440px;top:386px;">..</span>
<span class="pd" style="left:469px;top:386px;">..</span>
<span class="pd" style="left:492px;top:386px;">...</span>
<div class="rh" style="left:9px;top:398px;width:28px;height:13px;"><b>7</b></div>
<div style="left:38px;top:398px;width:119px;height:13px;background:#fff"></div>
<span class="pd" style="left:42px;top:399px;">...</span>
<span class="pd" style="left:74px;top:399px;">..</span>
<span class="pd" style="left:103px;top:399px;">..</span>
<span class="pd" style="left:126px;top:399px;">...</span>
<div style="left:160px;top:398px;width:119px;height:13px;background:#fff"></div>
<span class="pd" style="left:164px;top:399px;">...</span>
<span class="pd" style="left:196px;top:399px;">..</span>
<span class="pd" style="left:225px;top:399px;">..</span>
<span class="pd" style="left:248px;top:399px;">...</span>
<div style="left:282px;top:398px;width:119px;height:13px;background:#fff"></div>
<span class="pd" style="left:286px;top:399px;">...</span>
<span class="pd" style="left:318px;top:399px;">..</span>
<span class="pd" style="left:347px;top:399px;">..</span>
<span class="pd" style="left:370px;top:399px;">...</span>
<div style="left:404px;top:398px;width:119px;height:13px;background:#fff"></div>
<span class="pd" style="left:408px;top:399px;">...</span>
<span class="pd" style="left:440px;top:399px;">..</span>
<span class="pd" style="left:469px;top:399px;">..</span>
<span class="pd" style="left:492px;top:399px;">...</span>
<div class="rh" style="left:9px;top:411px;width:28px;height:13px;"><b>8</b></div>
<div style="left:38px;top:411px;width:119px;height:13px;background:#fff"></div>
<span class="pd" style="left:42px;top:412px;">...</span>
<span class="pd" style="left:74px;top:412px;">..</span>
<span class="pd" style="left:103px;top:412px;">..</span>
<span class="pd" style="left:126px;top:412px;">...</span>
<div style="left:160px;top:411px;width:119px;height:13px;background:#fff"></div>
<span class="pd" style="left:164px;top:412px;">...</span>
<span class="pd" style="left:196px;top:412px;">..</span>
<span class="pd" style="left:225px;top:412px;">..</span>
<span class="pd" style="left:248px;top:412px;">...</span>
<div style="left:282px;top:411px;width:119px;height:13px;background:#fff"></div>
<span class="pd" style="left:286px;top:412px;">...</span>
<span class="pd" style="left:318px;top:412px;">..</span>
<span class="pd" style="left:347px;top:412px;">..</span>
<span class="pt" style="left:369px;top:411.5px;">C10</span>
<div style="left:404px;top:411px;width:119px;height:13px;background:#fff"></div>
<span class="pd" style="left:408px;top:412px;">...</span>
<span class="pd" style="left:440px;top:412px;">..</span>
<span class="pd" style="left:469px;top:412px;">..</span>
<span class="pd" style="left:492px;top:412px;">...</span>
<div class="rh" style="left:9px;top:424px;width:28px;height:13px;"><b>9</b></div>
<div style="left:38px;top:424px;width:119px;height:13px;background:#fff"></div>
<span class="pd" style="left:42px;top:425px;">...</span>
<span class="pd" style="left:74px;top:425px;">..</span>
<span class="pd" style="left:103px;top:425px;">..</span>
<span class="pd" style="left:126px;top:425px;">...</span>
<div style="left:160px;top:424px;width:119px;height:13px;background:#fff"></div>
<span class="pd" style="left:164px;top:425px;">...</span>
<span class="pd" style="left:196px;top:425px;">..</span>
<span class="pd" style="left:225px;top:425px;">..</span>
<span class="pd" style="left:248px;top:425px;">...</span>
<div style="left:282px;top:424px;width:119px;height:13px;background:#fff"></div>
<span class="pd" style="left:286px;top:425px;">...</span>
<span class="pd" style="left:318px;top:425px;">..</span>
<span class="pd" style="left:347px;top:425px;">..</span>
<span class="pd" style="left:370px;top:425px;">...</span>
<div style="left:404px;top:424px;width:119px;height:13px;background:#fff"></div>
<span class="pd" style="left:408px;top:425px;">...</span>
<span class="pd" style="left:440px;top:425px;">..</span>
<span class="pd" style="left:469px;top:425px;">..</span>
<span class="pd" style="left:492px;top:425px;">...</span>
<div class="rh" style="left:9px;top:437px;width:28px;height:13px;"><b>10</b></div>
<div style="left:38px;top:437px;width:119px;height:13px;background:#fff"></div>
<span class="pd" style="left:42px;top:438px;">...</span>
<span class="pd" style="left:74px;top:438px;">..</span>
<span class="pd" style="left:103px;top:438px;">..</span>
<span class="pd" style="left:126px;top:438px;">...</span>
<div style="left:160px;top:437px;width:119px;height:13px;background:#fff"></div>
<span class="pt" style="left:163px;top:437.5px;">C-6</span>
<span class="pt" style="left:195px;top:437.5px;">21</span>
<span class="pd" style="left:225px;top:438px;">..</span>
<span class="pd" style="left:248px;top:438px;">...</span>
<div style="left:282px;top:437px;width:119px;height:13px;background:#fff"></div>
<span class="pd" style="left:286px;top:438px;">...</span>
<span class="pd" style="left:318px;top:438px;">..</span>
<span class="pd" style="left:347px;top:438px;">..</span>
<span class="pd" style="left:370px;top:438px;">...</span>
<div style="left:404px;top:437px;width:119px;height:13px;background:#fff"></div>
<span class="pd" style="left:408px;top:438px;">...</span>
<span class="pd" style="left:440px;top:438px;">..</span>
<span class="pd" style="left:469px;top:438px;">..</span>
<span class="pd" style="left:492px;top:438px;">...</span>
<div class="rh" style="left:9px;top:450px;width:28px;height:13px;"><b>11</b></div>
<div style="left:38px;top:450px;width:119px;height:13px;background:#fff"></div>
<span class="pd" style="left:42px;top:451px;">...</span>
<span class="pd" style="left:74px;top:451px;">..</span>
<span class="pd" style="left:103px;top:451px;">..</span>
<span class="pd" style="left:126px;top:451px;">...</span>
<div style="left:160px;top:450px;width:119px;height:13px;background:#fff"></div>
<span class="pd" style="left:164px;top:451px;">...</span>
<span class="pd" style="left:196px;top:451px;">..</span>
<span class="pd" style="left:225px;top:451px;">..</span>
<span class="pd" style="left:248px;top:451px;">...</span>
<div style="left:282px;top:450px;width:119px;height:13px;background:#fff"></div>
<span class="pd" style="left:286px;top:451px;">...</span>
<span class="pd" style="left:318px;top:451px;">..</span>
<span class="pd" style="left:347px;top:451px;">..</span>
<span class="pd" style="left:370px;top:451px;">...</span>
<div style="left:404px;top:450px;width:119px;height:13px;background:#fff"></div>
<span class="pd" style="left:408px;top:451px;">...</span>
<span class="pd" style="left:440px;top:451px;">..</span>
<span class="pd" style="left:469px;top:451px;">..</span>
<span class="pd" style="left:492px;top:451px;">...</span>
<div class="rh" style="left:9px;top:463px;width:28px;height:13px;"><b>12</b></div>
<div style="left:38px;top:463px;width:119px;height:13px;background:#fff"></div>
<span class="pt" style="left:41px;top:463.5px;">D-6</span>
<span class="pt" style="left:73px;top:463.5px;">03</span>
<span class="pd" style="left:103px;top:464px;">..</span>
<span class="pd" style="left:126px;top:464px;">...</span>
<div style="left:160px;top:463px;width:119px;height:13px;background:#fff"></div>
<span class="pd" style="left:164px;top:464px;">...</span>
<span class="pd" style="left:196px;top:464px;">..</span>
<span class="pd" style="left:225px;top:464px;">..</span>
<span class="pd" style="left:248px;top:464px;">...</span>
<div style="left:282px;top:463px;width:119px;height:13px;background:#fff"></div>
<span class="pt" style="left:285px;top:463.5px;">C-5</span>
<span class="pt" style="left:317px;top:463.5px;">05</span>
<span class="pd" style="left:347px;top:464px;">..</span>
<span class="pt" style="left:369px;top:463.5px;">C20</span>
<div style="left:404px;top:463px;width:119px;height:13px;background:#fff"></div>
<span class="pd" style="left:408px;top:464px;">...</span>
<span class="pd" style="left:440px;top:464px;">..</span>
<span class="pd" style="left:469px;top:464px;">..</span>
<span class="pd" style="left:492px;top:464px;">...</span>
<div class="rh" style="left:9px;top:476px;width:28px;height:13px;"><b>13</b></div>
<div style="left:38px;top:476px;width:119px;height:13px;background:#fff"></div>
<span class="pd" style="left:42px;top:477px;">...</span>
<span class="pd" style="left:74px;top:477px;">..</span>
<span class="pd" style="left:103px;top:477px;">..</span>
<span class="pd" style="left:126px;top:477px;">...</span>
<div style="left:160px;top:476px;width:119px;height:13px;background:#fff"></div>
<span class="pd" style="left:164px;top:477px;">...</span>
<span class="pd" style="left:196px;top:477px;">..</span>
<span class="pd" style="left:225px;top:477px;">..</span>
<span class="pt" style="left:247px;top:476.5px;">C10</span>
<div style="left:282px;top:476px;width:119px;height:13px;background:#fff"></div>
<span class="pd" style="left:286px;top:477px;">...</span>
<span class="pd" style="left:318px;top:477px;">..</span>
<span class="pd" style="left:347px;top:477px;">..</span>
<span class="pd" style="left:370px;top:477px;">...</span>
<div style="left:404px;top:476px;width:119px;height:13px;background:#fff"></div>
<span class="pd" style="left:408px;top:477px;">...</span>
<span class="pd" style="left:440px;top:477px;">..</span>
<span class="pd" style="left:469px;top:477px;">..</span>
<span class="pd" style="left:492px;top:477px;">...</span>
<div class="rh" style="left:9px;top:489px;width:28px;height:13px;"><b>14</b></div>
<div style="left:38px;top:489px;width:119px;height:13px;background:#fff"></div>
<span class="pd" style="left:42px;top:490px;">...</span>
<span class="pd" style="left:74px;top:490px;">..</span>
<span class="pd" style="left:103px;top:490px;">..</span>
<span class="pd" style="left:126px;top:490px;">...</span>
<div style="left:160px;top:489px;width:119px;height:13px;background:#fff"></div>
<span class="pt" style="left:163px;top:489.5px;">C-6</span>
<span class="pt" style="left:195px;top:489.5px;">20</span>
<span class="pd" style="left:225px;top:490px;">..</span>
<span class="pd" style="left:248px;top:490px;">...</span>
<div style="left:282px;top:489px;width:119px;height:13px;background:#fff"></div>
<span class="pd" style="left:286px;top:490px;">...</span>
<span class="pd" style="left:318px;top:490px;">..</span>
<span class="pd" style="left:347px;top:490px;">..</span>
<span class="pd" style="left:370px;top:490px;">...</span>
<div style="left:404px;top:489px;width:119px;height:13px;background:#fff"></div>
<span class="pd" style="left:408px;top:490px;">...</span>
<span class="pd" style="left:440px;top:490px;">..</span>
<span class="pd" style="left:469px;top:490px;">..</span>
<span class="pd" style="left:492px;top:490px;">...</span>
<div class="rh" style="left:9px;top:502px;width:28px;height:13px;"><b>15</b></div>
<div style="left:38px;top:502px;width:119px;height:13px;background:#fff"></div>
<span class="pd" style="left:42px;top:503px;">...</span>
<span class="pd" style="left:74px;top:503px;">..</span>
<span class="pd" style="left:103px;top:503px;">..</span>
<span class="pd" style="left:126px;top:503px;">...</span>
<div style="left:160px;top:502px;width:119px;height:13px;background:#fff"></div>
<span class="pd" style="left:164px;top:503px;">...</span>
<span class="pd" style="left:196px;top:503px;">..</span>
<span class="pd" style="left:225px;top:503px;">..</span>
<span class="pd" style="left:248px;top:503px;">...</span>
<div style="left:282px;top:502px;width:119px;height:13px;background:#fff"></div>
<span class="pd" style="left:286px;top:503px;">...</span>
<span class="pd" style="left:318px;top:503px;">..</span>
<span class="pd" style="left:347px;top:503px;">..</span>
<span class="pd" style="left:370px;top:503px;">...</span>
<div style="left:404px;top:502px;width:119px;height:13px;background:#fff"></div>
<span class="pd" style="left:408px;top:503px;">...</span>
<span class="pd" style="left:440px;top:503px;">..</span>
<span class="pd" style="left:469px;top:503px;">..</span>
<span class="pd" style="left:492px;top:503px;">...</span>
<div class="rh" style="left:9px;top:515px;width:28px;height:13px;"><b>16</b></div>
<div style="left:38px;top:515px;width:119px;height:13px;background:#fff"></div>
<span class="pd" style="left:42px;top:516px;">...</span>
<span class="pd" style="left:74px;top:516px;">..</span>
<span class="pd" style="left:103px;top:516px;">..</span>
<span class="pd" style="left:126px;top:516px;">...</span>
<div style="left:160px;top:515px;width:119px;height:13px;background:#fff"></div>
<span class="pt" style="left:163px;top:515.5px;">C-6</span>
<span class="pt" style="left:195px;top:515.5px;">20</span>
<span class="pd" style="left:225px;top:516px;">..</span>
<span class="pd" style="left:248px;top:516px;">...</span>
<div style="left:282px;top:515px;width:119px;height:13px;background:#fff"></div>
<span class="pd" style="left:286px;top:516px;">...</span>
<span class="pd" style="left:318px;top:516px;">..</span>
<span class="pd" style="left:347px;top:516px;">..</span>
<span class="pt" style="left:369px;top:515.5px;">C10</span>
<div style="left:404px;top:515px;width:119px;height:13px;background:#fff"></div>
<span class="pd" style="left:408px;top:516px;">...</span>
<span class="pd" style="left:440px;top:516px;">..</span>
<span class="pd" style="left:469px;top:516px;">..</span>
<span class="pd" style="left:492px;top:516px;">...</span>
<div class="rh" style="left:9px;top:528px;width:28px;height:13px;"><b>17</b></div>
<div style="left:38px;top:528px;width:119px;height:13px;background:#fff"></div>
<span class="pd" style="left:42px;top:529px;">...</span>
<span class="pd" style="left:74px;top:529px;">..</span>
<span class="pd" style="left:103px;top:529px;">..</span>
<span class="pd" style="left:126px;top:529px;">...</span>
<div style="left:160px;top:528px;width:119px;height:13px;background:#fff"></div>
<span class="pd" style="left:164px;top:529px;">...</span>
<span class="pd" style="left:196px;top:529px;">..</span>
<span class="pd" style="left:225px;top:529px;">..</span>
<span class="pt" style="left:247px;top:528.5px;">C10</span>
<div style="left:282px;top:528px;width:119px;height:13px;background:#fff"></div>
<span class="pd" style="left:286px;top:529px;">...</span>
<span class="pd" style="left:318px;top:529px;">..</span>
<span class="pd" style="left:347px;top:529px;">..</span>
<span class="pd" style="left:370px;top:529px;">...</span>
<div style="left:404px;top:528px;width:119px;height:13px;background:#fff"></div>
<span class="pd" style="left:408px;top:529px;">...</span>
<span class="pd" style="left:440px;top:529px;">..</span>
<span class="pd" style="left:469px;top:529px;">..</span>
<span class="pd" style="left:492px;top:529px;">...</span>
<div style="left:159px;top:294px;width:1px;height:247px;background:#4e4668"></div>
<div style="left:281px;top:294px;width:1px;height:247px;background:#4e4668"></div>
<div style="left:403px;top:294px;width:1px;height:247px;background:#4e4668"></div>
<div style="left:525px;top:294px;width:1px;height:247px;background:#4e4668"></div>
</div>
<div style="position:absolute;left:0;top:572px;width:740px;height:1px;background:#fff"></div>
<div style="position:absolute;left:0;top:573px;width:740px;height:3px;background:#2e7070"></div>
<div style="position:absolute;left:102px;top:575px;width:230px;height:1px;background:#fff"></div>
<div style="position:absolute;left:335px;top:575px;width:229px;height:1px;background:#fff"></div>
<div style="position:absolute;left:735px;top:0;width:2px;height:572px;background:#c8c0d8"></div>
<div style="position:absolute;left:737px;top:512px;width:3px;height:64px;background:#2e7070;border-left:1px solid #000;border-top:1px solid #333;box-sizing:border-box"></div>
<div style="position:absolute;left:738px;top:513px;width:2px;height:30px;background:#fff"></div>
</body></html>
